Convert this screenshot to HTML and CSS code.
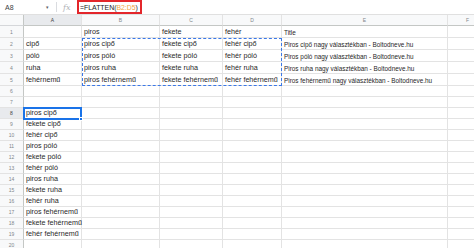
FILE: index.html
```html
<!DOCTYPE html>
<html lang="hu">
<head>
    <meta charset="UTF-8">
    <title>FLATTEN</title>
    <link rel="stylesheet" href="styles.css">
</head>
<body>
    <div class="formula-bar">
        <div class="name-box">A8<span class="caret">&#9662;</span></div>
        <div class="divider"></div>
        <div class="fx">fx</div>
        <div class="formula">=FLATTEN(<span class="ref">B2:D5</span>)</div>
    </div>

    <div class="sheet" id="sheet">
        <!-- overlays sit in the same grid, on top of the cells -->
        <div class="copy-range"></div>
        <div class="active-cell"><span class="handle"></span></div>
    </div>

    <script>
        const cols = ['A', 'B', 'C', 'D', 'E', 'F'];
        const data = {
            1: ['', 'piros', 'fekete', 'fehér', 'Title'],
            2: ['cipő', 'piros cipő', 'fekete cipő', 'fehér cipő', 'Piros cipő nagy választékban - Boltodneve.hu'],
            3: ['póló', 'piros póló', 'fekete póló', 'fehér póló', 'Piros póló nagy választékban - Boltodneve.hu'],
            4: ['ruha', 'piros ruha', 'fekete ruha', 'fehér ruha', 'Piros ruha nagy választékban - Boltodneve.hu'],
            5: ['fehérnemű', 'piros fehérnemű', 'fekete fehérnemű', 'fehér fehérnemű', 'Piros fehérnemű nagy választékban - Boltodneve.hu'],
        };
        // FLATTEN output, starting at A8
        const flat = ['piros cipő', 'fekete cipő', 'fehér cipő', 'piros póló', 'fekete póló', 'fehér póló',
                      'piros ruha', 'fekete ruha', 'fehér ruha', 'piros fehérnemű', 'fekete fehérnemű', 'fehér fehérnemű'];
        flat.forEach((v, i) => { data[8 + i] = [v]; });

        const sheet = document.getElementById('sheet');
        const first = sheet.firstElementChild;

        // grid row/col are given explicitly so the overlays don't push cells around
        function cell(cls, text, row, col) {
            const el = document.createElement('div');
            el.className = cls;
            el.textContent = text || '';
            el.style.gridRow = row;
            el.style.gridColumn = col;
            sheet.insertBefore(el, first);
        }

        cell('corner', '', 1, 1);
        cols.forEach((c, i) => cell(c === 'A' ? 'col-head selected' : 'col-head', c, 1, i + 2));

        for (let r = 1; r <= 20; r++) {
            cell(r === 8 ? 'row-head selected' : 'row-head', r, r + 1, 1);
            const values = data[r] || [];
            cols.forEach((c, i) => {
                let cls = 'cell';
                if (r <= 5 && c === 'E') cls += ' title';
                cell(cls, values[i], r + 1, i + 2);
            });
        }
    </script>
</body>
</html>
```

FILE: styles.css
```css
body {
    margin: 0;
    background: #fff;
    font-family: "Liberation Sans", Arial, sans-serif;
    color: #202124;
    overflow: hidden;
}

/* formula bar */
.formula-bar {
    display: flex;
    align-items: center;
    height: 15px;
    box-sizing: border-box;
    border-bottom: 1px solid #e0e0e0;
    font-size: 7px;
}
.name-box {
    display: flex;
    align-items: center;
    justify-content: space-between;
    width: 44px;
    padding-left: 5px;
    padding-right: 2px;
    color: #3c4043;
}
.caret {
    font-size: 5px;
    color: #5f6368;
}
.divider {
    width: 1px;
    height: 10px;
    background: #dadce0;
    margin-left: 5px;
}
.fx {
    font-family: "DejaVu Serif", serif;
    font-style: italic;
    color: #b0b3b8;
    font-size: 8px;
    margin-left: 6px;
    width: 12px;
}
.formula {
    align-self: flex-start;
    height: 14px;
    box-sizing: border-box;
    margin-left: 2px;
    padding: 0 2px 0 1px;
    border: 2px solid #e3262b;
    display: flex;
    align-items: center;
    font-size: 6.9px;
    color: #202124;
}
.ref {
    color: #f2a541;
}

/* grid */
.sheet {
    display: grid;
    grid-template-columns: 24px 58px 78px 63px 59px 166px 40px;
    grid-template-rows: 11px repeat(5, 12px) repeat(15, 11px);
}
.sheet > div {
    box-sizing: border-box;
    min-width: 0;
}
.cell {
    display: flex;
    align-items: flex-end;
    padding: 0 2px 1px;
    border-right: 1px solid #e3e3e3;
    border-bottom: 1px solid #e3e3e3;
    font-size: 7.2px;
    white-space: nowrap;
    color: #1f1f1f;
}
.cell.title {
    font-size: 6.4px;
}
.corner,
.col-head,
.row-head {
    display: flex;
    align-items: center;
    justify-content: center;
    background: #f8f9fa;
    color: #80868b;
    font-size: 5px;
    border-right: 1px solid #d5d7da;
    border-bottom: 1px solid #d5d7da;
}
.corner {
    border-right-color: #c4c7c5;
}
.col-head {
    border-right-color: #e3e3e3;
    border-bottom-color: #c4c7c5;
}
.row-head {
    border-right-color: #c4c7c5;
    border-bottom-color: #e3e3e3;
}
.selected {
    background: #e8eaed;
    color: #3c4043;
}

/* overlays */
.copy-range {
    grid-column: 3 / 6;
    grid-row: 3 / 7;
    border: 1px dashed #3b78e7;
    pointer-events: none;
    z-index: 1;
}
.active-cell {
    grid-column: 2 / 3;
    grid-row: 9 / 10;
    margin: -1px 0 -1px -1px;
    border: 2px solid #1a73e8;
    position: relative;
    z-index: 1;
}
.handle {
    position: absolute;
    right: -3px;
    bottom: -3px;
    width: 4px;
    height: 4px;
    background: #1a73e8;
    border: 1px solid #fff;
    box-sizing: border-box;
}
```
